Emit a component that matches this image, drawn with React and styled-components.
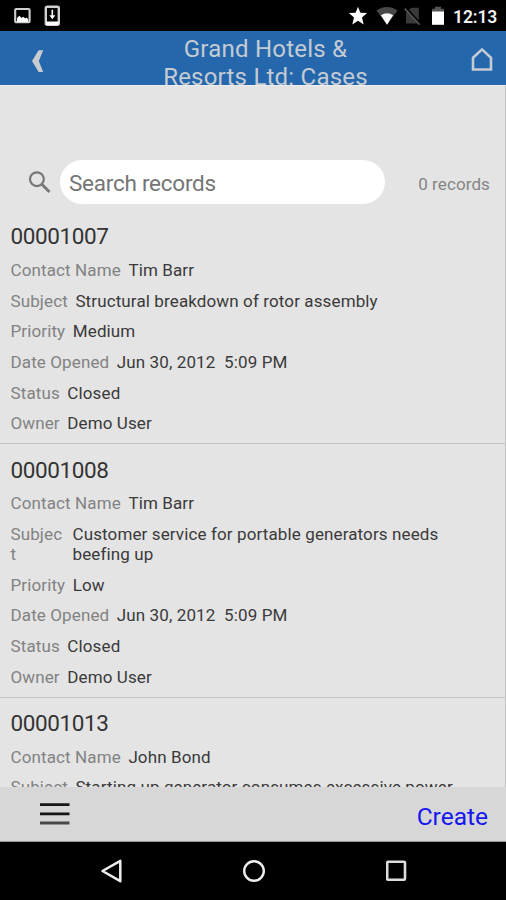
import React from 'react';
import styled, { createGlobalStyle } from 'styled-components';

const GlobalStyle = createGlobalStyle`
  *, *::before, *::after { box-sizing: border-box; }
  body { margin: 0; background: #000; font-family: Roboto, "Liberation Sans", sans-serif; }
  svg { display: block; flex: none; }
`;

const Screen = styled.div`
  width: 506px;
  height: 900px;
  display: flex;
  flex-direction: column;
  overflow: hidden;
  background: #e4e4e4;
`;

const StatusBar = styled.div`
  flex: none;
  height: 31px;
  padding: 0 9px 0 14px;
  display: flex;
  justify-content: space-between;
  background: #000;
`;

const StatusGroup = styled.div`
  display: flex;
  align-items: center;
`;

const StatusGap = styled.span`
  width: ${({ $size }) => $size}px;
`;

const Clock = styled.span`
  width: 44px;
  margin-left: 8px;
  padding-top: 2px;
  color: #f2f2f2;
  font-size: 17.5px;
  font-weight: 600;
  line-height: 20px;
  letter-spacing: -0.1px;
  white-space: nowrap;
`;

const Header = styled.header`
  flex: none;
  height: 54px;
  display: flex;
  justify-content: space-between;
  overflow: hidden;
  padding: 0 13px 0 32px;
  background: #2467ad;
`;

const HeaderButton = styled.button`
  height: ${({ $height }) => $height}px;
  width: 22px;
  padding: 0;
  border: 0;
  background: none;
  display: flex;
  align-items: center;
`;

const HeaderTitle = styled.h1`
  margin: 4px 0 0;
  padding-left: 6px;
  color: #c5cbd2;
  font-size: 24px;
  font-weight: 400;
  line-height: 28px;
  letter-spacing: 0.22px;
  text-align: center;
  white-space: nowrap;
`;

const Content = styled.main`
  flex: 1;
  min-height: 0;
  overflow: hidden;
  border-right: 1px solid #c3c3c3;
  border-top: 1px solid #eeeeee;
`;

const SearchBar = styled.div`
  height: 44px;
  margin-top: 74px;
  padding: 0 15px 0 28px;
  display: flex;
  align-items: center;
`;

const SearchField = styled.div`
  width: 325px;
  height: 44px;
  margin-left: 9px;
  padding-left: 9px;
  border-radius: 22px;
  background: #fff;
  color: #757575;
  font-size: 22.5px;
  letter-spacing: -0.25px;
  line-height: 46px;
`;

const RecordCount = styled.span`
  margin-left: auto;
  color: #858585;
  font-size: 17px;
  letter-spacing: 0.1px;
  line-height: 20px;
  padding-top: 3px;
`;

const RecordList = styled.div`
  margin-top: 7px;
`;

const Record = styled.article`
  padding: 0 10px 5.1px 10.5px;
  border-bottom: 1px solid #c2c2c2;
`;

const RecordTitle = styled.h2`
  height: 43.2px;
  margin: 0;
  padding-top: 10.2px;
  color: #333;
  font-size: 22.5px;
  font-weight: 400;
  line-height: 30px;
  letter-spacing: -0.4px;
`;

const Field = styled.div`
  display: flex;
  gap: 7.5px;
  padding: 5.7px 0 5px;
  font-size: 17px;
  line-height: 20px;
  letter-spacing: 0.12px;
`;

const Label = styled.span`
  flex: none;
  width: ${({ $narrow }) => ($narrow ? '54.5px' : 'auto')};
  word-break: break-all;
  color: #828282;
`;

const Value = styled.span`
  max-width: 380px;
  color: #3a3a3a;
  white-space: pre-wrap;
`;

const Toolbar = styled.footer`
  flex: none;
  height: 55px;
  padding: 0 18px 0 40px;
  display: flex;
  align-items: center;
  justify-content: space-between;
  background: #d7d7d7;
  border-bottom: 1px solid #999;
`;

const CreateButton = styled.button`
  padding: 5px 0 0;
  border: 0;
  background: none;
  color: #1616f0;
  font: 400 24.5px/30px Roboto, sans-serif;
`;

const NavBar = styled.nav`
  flex: none;
  height: 58px;
  padding: 0 99px 0 100px;
  display: flex;
  align-items: center;
  justify-content: space-between;
  background: #000;
`;

const records = [
  {
    id: '00001007',
    fields: [
      ['Contact Name', 'Tim Barr'],
      ['Subject', 'Structural breakdown of rotor assembly'],
      ['Priority', 'Medium'],
      ['Date Opened', 'Jun 30, 2012  5:09 PM'],
      ['Status', 'Closed'],
      ['Owner', 'Demo User'],
    ],
  },
  {
    id: '00001008',
    fields: [
      ['Contact Name', 'Tim Barr'],
      ['Subject', 'Customer service for portable generators needs beefing up', true],
      ['Priority', 'Low'],
      ['Date Opened', 'Jun 30, 2012  5:09 PM'],
      ['Status', 'Closed'],
      ['Owner', 'Demo User'],
    ],
  },
  {
    id: '00001013',
    fields: [
      ['Contact Name', 'John Bond'],
      ['Subject', 'Starting up generator consumes excessive power'],
    ],
  },
];

const ImageIcon = () => (
  <svg width="18" height="31" viewBox="0 0 18 31">
    <rect x="1.2" y="9" width="14.4" height="13.2" rx="1" fill="none" stroke="#d0d0d0" strokeWidth="2.1" />
    <path d="M3 22v-4l2.3-2.2 2.4 2.2 1.5-1.2 1.8 1.4 1.8-.4 1.4 1.4V22z" fill="#fff" />
  </svg>
);

const DownloadIcon = () => (
  <svg width="17" height="31" viewBox="0 0 17 31">
    <rect x="1.8" y="6.8" width="13" height="18" rx="1.5" fill="none" stroke="#d0d0d0" strokeWidth="2.4" />
    <path d="M2 21.5h12.5V25H2z" fill="#fff" />
    <path d="M8.3 9.8v6" stroke="#fff" strokeWidth="1.6" />
    <path d="M5.3 15.3h6l-3 4z" fill="#fff" />
  </svg>
);

const StarIcon = () => (
  <svg width="20" height="31" viewBox="0 0 20 31">
    <path d="M10 6.7l2.4 6 6.7.4-5.1 4.3 1.7 7.1L10 20.8l-5.7 3.7L6 17.4.9 13.1l6.7-.4z" fill="#fff" />
  </svg>
);

const WifiIcon = () => (
  <svg width="22" height="31" viewBox="0 0 22 31">
    <path d="M.5 10.4C7 5.8 15 5.8 21.5 10.4L11 24.8z" fill="#484848" />
    <path d="M4.9 15.3q6.1-4.1 12.2 0L11 24.8z" fill="#fff" />
  </svg>
);

const NoSimIcon = () => (
  <svg width="18" height="31" viewBox="0 0 18 31">
    <path d="M7 7.8h7.8v15.8H2V12.8z" fill="#3a3a3a" />
    <path d="M2.4 8.1l14 15.5" stroke="#000" strokeWidth="1.8" />
    <path d="M.7 8.6l15 16.2" stroke="#555" strokeWidth="1.6" />
  </svg>
);

const BatteryIcon = () => (
  <svg width="14" height="31" viewBox="0 0 14 31">
    <path d="M1 8.7h3V6.8h6v1.9h3V12H1z" fill="#555" />
    <path d="M1 11.5h12v13.3H1z" fill="#fff" />
  </svg>
);

const SearchIcon = () => (
  <svg width="23" height="24" viewBox="0 0 23 24">
    <circle cx="8.9" cy="9.2" r="6.9" fill="none" stroke="#777" strokeWidth="2.2" />
    <path d="M13.6 14l7.9 8" stroke="#777" strokeWidth="2.8" />
  </svg>
);

export default function App() {
  return (
    <>
      <GlobalStyle />
      <Screen>
        <StatusBar>
          <StatusGroup>
            <ImageIcon />
            <StatusGap $size={12} />
            <DownloadIcon />
          </StatusGroup>
          <StatusGroup>
            <StarIcon />
            <StatusGap $size={8} />
            <WifiIcon />
            <StatusGap $size={6} />
            <NoSimIcon />
            <StatusGap $size={9} />
            <BatteryIcon />
            <Clock>12:13</Clock>
          </StatusGroup>
        </StatusBar>
        <Header>
          <HeaderButton $height={60} aria-label="Back">
            <svg width="12" height="24" viewBox="0 0 12 24">
              <path d="M6.6 1.2h4.6L6.8 12l4.4 11H6.6L0 12z" fill="#c8ccd0" />
            </svg>
          </HeaderButton>
          <HeaderTitle>
            Grand Hotels &amp;
            <br />
            Resorts Ltd: Cases
          </HeaderTitle>
          <HeaderButton $height={57} aria-label="Home">
            <svg width="22" height="25" viewBox="0 0 22 25">
              <path d="M2 10.7L11 2.4l9 8.3v11.8H2z" fill="none" stroke="#c5cbd2" strokeWidth="2.6" />
            </svg>
          </HeaderButton>
        </Header>
        <Content>
          <SearchBar>
            <SearchIcon />
            <SearchField>Search records</SearchField>
            <RecordCount>0 records</RecordCount>
          </SearchBar>
          <RecordList>
            {records.map((record) => (
              <Record key={record.id}>
                <RecordTitle>{record.id}</RecordTitle>
                {record.fields.map(([label, value, narrow]) => (
                  <Field key={label}>
                    <Label $narrow={narrow}>{label}</Label>
                    <Value>{value}</Value>
                  </Field>
                ))}
              </Record>
            ))}
          </RecordList>
        </Content>
        <Toolbar>
          <svg width="30" height="24" viewBox="0 0 30 24">
            <path d="M0 2.7h29.5M0 11.8h29.5" stroke="#151515" strokeWidth="2.8" />
            <path d="M0 21h29.5" stroke="#484848" strokeWidth="3" />
          </svg>
          <CreateButton>Create</CreateButton>
        </Toolbar>
        <NavBar>
          <svg width="23" height="24" viewBox="0 0 23 24">
            <path d="M2.5 12L20.3 1.8v20.4z" fill="none" stroke="#eee" strokeWidth="2.5" strokeLinejoin="round" />
          </svg>
          <svg width="24" height="24" viewBox="0 0 24 24">
            <circle cx="11" cy="12" r="9.8" fill="none" stroke="#eee" strokeWidth="2.4" />
          </svg>
          <svg width="21" height="24" viewBox="0 0 21 24">
            <rect x="1.2" y="2.8" width="17.8" height="18" rx="1" fill="none" stroke="#ddd" strokeWidth="2.6" />
          </svg>
        </NavBar>
      </Screen>
    </>
  );
}
